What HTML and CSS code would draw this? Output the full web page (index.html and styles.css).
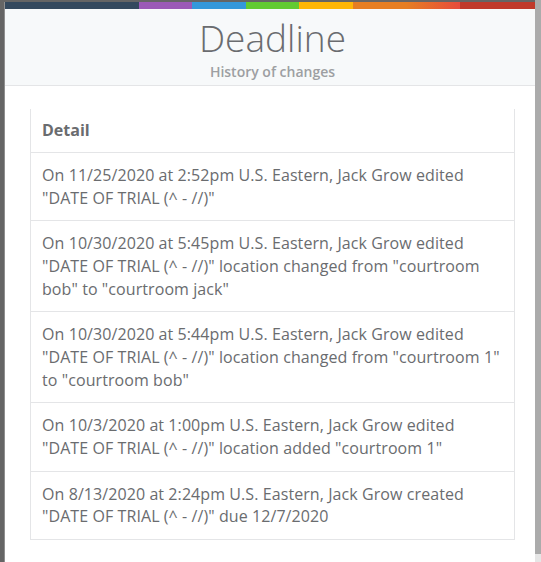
FILE: index.html
```
<!DOCTYPE html>
<html lang="en">
<head>
<meta charset="utf-8" />
<title>Deadline - History of changes</title>
<link rel="stylesheet" href="styles.css">
</head>
<body>
<div class="backdrop">
  <div class="gutter"></div>
  <div class="modal">
    <div class="color-line"></div>
    <div class="modal-header">
      <h4 class="modal-title">Deadline</h4>
      <small class="modal-sub">History of changes</small>
    </div>
    <div class="modal-body">
      <table class="history">
        <thead>
          <tr><th>Detail</th></tr>
        </thead>
        <tbody>
          <tr><td>On 11/25/2020 at 2:52pm U.S. Eastern, Jack Grow edited "DATE OF TRIAL (^ - //)"</td></tr>
          <tr><td>On 10/30/2020 at 5:45pm U.S. Eastern, Jack Grow edited "DATE OF TRIAL (^ - //)" location changed from "courtroom bob" to "courtroom jack"</td></tr>
          <tr><td>On 10/30/2020 at 5:44pm U.S. Eastern, Jack Grow edited "DATE OF TRIAL (^ - //)" location changed from "courtroom 1" to "courtroom bob"</td></tr>
          <tr><td>On 10/3/2020 at 1:00pm U.S. Eastern, Jack Grow edited "DATE OF TRIAL (^ - //)" location added "courtroom 1"</td></tr>
          <tr><td>On 8/13/2020 at 2:24pm U.S. Eastern, Jack Grow created "DATE OF TRIAL (^ - //)" due 12/7/2020</td></tr>
        </tbody>
      </table>
    </div>
  </div>
</div>
<div class="scrollbar"></div>
</body>
</html>
```

FILE: styles.css
```
html, body {
  margin:0; height:100%; overflow:hidden;
}
body {
  background:#656565; font-family:"Open Sans", "Liberation Sans", sans-serif; color:#6a6c6f;
}
.backdrop {
  display:flex; padding-top:2px; height:100%; box-sizing:border-box;
}
.gutter {
  width:4px; flex-shrink:0; border-right:1px solid #8f8f8f;
}
.modal {
  width:535px; flex-shrink:0; background:#fff;
}
.color-line {
  height:7px;
  background:linear-gradient(to right,
    #34495e 0, #34495e 25%, #9b59b6 25%, #9b59b6 35%, #3498db 35%, #3498db 45%,
    #62cb31 45%, #62cb31 55%, #ffb606 55%, #ffb606 65%, #e67e22 65%, #e67e22 75%,
    #e74c3c 85%, #c0392b 85%, #c0392b 100%);
}
.modal-header {
  background:#f7f9fa; border-bottom:1px solid #e4e5e7;
  padding:4px 0 5px; text-align:center;
}
.modal-title {
  margin:0; font-size:37px; font-weight:300; line-height:50px; color:#6a6c6f;
}
.modal-sub {
  display:block; margin-top:1px; font-size:14px; font-weight:600; line-height:16px; color:#9d9fa2;
}
.modal-body {
  padding:23px 25px 0;
}
.history {
  width:100%; border-collapse:collapse;
  border:1px solid #e4e5e7; border-top:0;
}
.history th {
  text-align:left; font-size:16px; font-weight:700; line-height:23px;
  padding:10px 11px; border-bottom:1px solid #e4e5e7;
}
.history td {
  font-size:16px; line-height:22.86px; letter-spacing:0.08px;
  padding:11px 13px 10.5px 11px; border-top:1px solid #e4e5e7;
}
.scrollbar {
  position:absolute; top:0; right:0; bottom:0; width:6px;
  background:linear-gradient(to bottom, #ababab 0, #ababab calc(100% - 8px), #e6e6e6 calc(100% - 8px));
}
```
